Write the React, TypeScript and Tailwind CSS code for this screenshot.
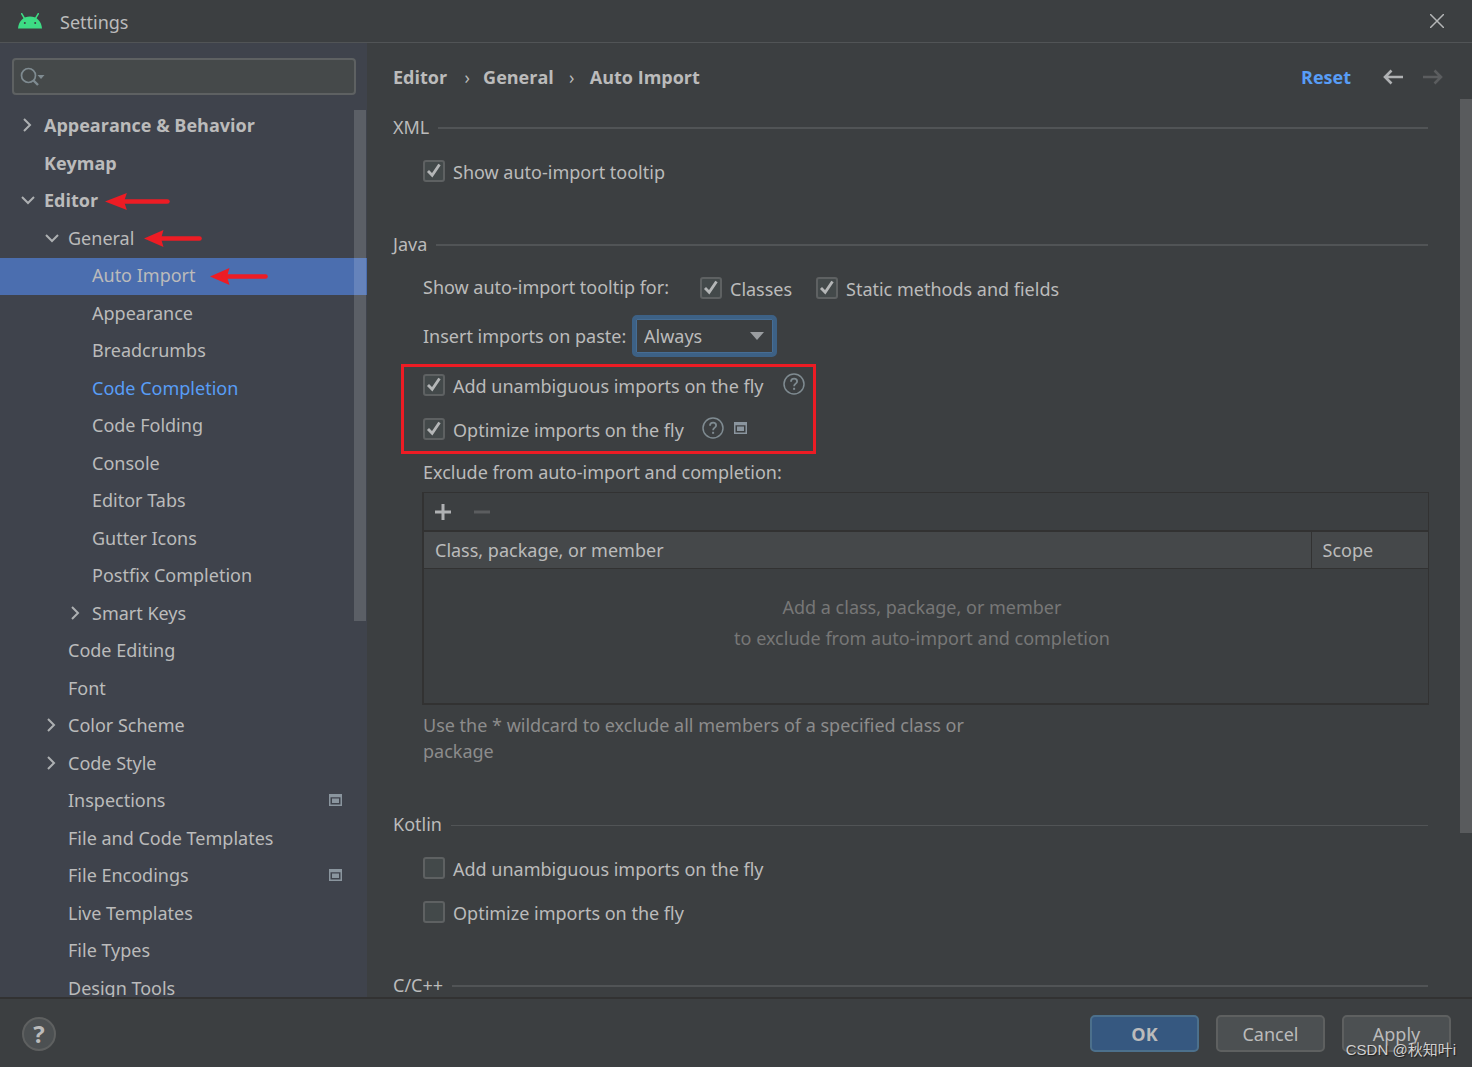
import { useState, type ReactNode } from 'react';
import clsx from 'clsx';

interface TreeItem {
  label: string;
  level: number;
  state?: 'open' | 'closed';
  bold?: boolean;
  link?: boolean;
  project?: boolean;
  arrow?: string;
}

const TREE: TreeItem[] = [
  { label: 'Appearance & Behavior', level: 0, state: 'closed', bold: true },
  { label: 'Keymap', level: 0, bold: true },
  { label: 'Editor', level: 0, state: 'open', bold: true, arrow: 'left-[105px] w-[65px]' },
  { label: 'General', level: 1, state: 'open', arrow: 'left-[144px] w-[58px]' },
  { label: 'Auto Import', level: 2, arrow: 'left-[210px] w-[58px]' },
  { label: 'Appearance', level: 2 },
  { label: 'Breadcrumbs', level: 2 },
  { label: 'Code Completion', level: 2, link: true },
  { label: 'Code Folding', level: 2 },
  { label: 'Console', level: 2 },
  { label: 'Editor Tabs', level: 2 },
  { label: 'Gutter Icons', level: 2 },
  { label: 'Postfix Completion', level: 2 },
  { label: 'Smart Keys', level: 2, state: 'closed' },
  { label: 'Code Editing', level: 1 },
  { label: 'Font', level: 1 },
  { label: 'Color Scheme', level: 1, state: 'closed' },
  { label: 'Code Style', level: 1, state: 'closed' },
  { label: 'Inspections', level: 1, project: true },
  { label: 'File and Code Templates', level: 1 },
  { label: 'File Encodings', level: 1, project: true },
  { label: 'Live Templates', level: 1 },
  { label: 'File Types', level: 1 },
  { label: 'Design Tools', level: 1 },
];

const INDENT = ['pl-5', 'pl-11', 'pl-[68px]'];

function AndroidIcon() {
  return (
    <svg width="24" height="16" viewBox="0 0 24 16" className="shrink-0">
      <path d="M3.800 .8l2.800 4.800M20.200 .8l-2.800 4.800" stroke="#3ddc84" strokeWidth="1.600" strokeLinecap="round" />
      <path d="M0 15.6C.5 8 5.5 3.4 12 3.4S23.500 8 24 15.600z" fill="#3ddc84" />
      <circle cx="6.800" cy="10" r="1" fill="#3c3f41" />
      <circle cx="17.200" cy="10" r="1" fill="#3c3f41" />
    </svg>
  );
}

function Chevron({ state }: { state?: 'open' | 'closed' }) {
  return (
    <svg width="16" height="16" viewBox="0 0 16 16" className="shrink-0" fill="none" stroke="#adb0b2" strokeWidth="2">
      {state === 'closed' && <path d="M4 2l6 6-6 6" />}
      {state === 'open' && <path d="M2 5l6 6 6-6" />}
    </svg>
  );
}

// Marks settings that are stored per project
function ProjectIcon() {
  return (
    <svg width="13" height="12" viewBox="0 0 13 12" className="shrink-0">
      <path fillRule="evenodd" d="M0 0h13v12H0zM1.500 3.200v7.300h10V3.200z" fill="#8a959e" />
      <path d="M3 4.500h7V9H3z" fill="#8a959e" />
    </svg>
  );
}

function HelpIcon() {
  return (
    <svg width="22" height="22" viewBox="0 0 22 22" className="shrink-0" fill="none" stroke="#7f8b91">
      <circle cx="11" cy="11" r="10" strokeWidth="1.5" />
      <path d="M8 8.800c0-2 1.300-3.100 3.100-3.100s3 1.100 3 2.700c0 2.200-3 2.300-3 4.800" strokeWidth="1.800" />
      <path d="M11.100 14.800v2" strokeWidth="2" />
    </svg>
  );
}

function RedArrow({ className }: { className: string }) {
  return (
    <svg className={clsx('pointer-events-none absolute top-[9px] h-[18px]', className)} viewBox="0 0 58 18" preserveAspectRatio="none">
      <path d="M0 9.500L19.500 1l-2.500 8.500 2.500 8.500z" fill="#ed1c24" />
      <path d="M14 9.500h41.500" stroke="#ed1c24" strokeWidth="4.600" strokeLinecap="round" />
    </svg>
  );
}

function Check({ label, on = false, children }: { label: string; on?: boolean; children?: ReactNode }) {
  const [checked, setChecked] = useState(on);
  return (
    <div className="flex h-7 items-center">
      <label className="flex items-center gap-2">
        <span className="relative -mt-0.5 flex">
          <input
            type="checkbox"
            checked={checked}
            onChange={(e) => setChecked(e.target.checked)}
            className="size-[22px] appearance-none rounded-[3px] border-2 border-[#5e6162] bg-[#43494a]"
          />
          {checked && (
            <svg className="pointer-events-none absolute inset-0" width="22" height="22" viewBox="0 0 22 22" fill="none">
              <path d="M5 11l4.200 4.300L16.500 4.500" stroke="#b4b6b7" strokeWidth="2.800" />
            </svg>
          )}
        </span>
        <span>{label}</span>
      </label>
      {children}
    </div>
  );
}

function SectionTitle({ title, thin }: { title: string; thin?: boolean }) {
  return (
    <div className="flex h-7 items-center gap-[9px]">
      <h2>{title}</h2>
      <div className={clsx('mt-0.5 flex-1 bg-[#515456]', thin ? 'h-px' : 'h-0.5')} />
    </div>
  );
}

function Sidebar() {
  const [selected, setSelected] = useState('Auto Import');
  return (
    <aside className="relative flex w-[367px] shrink-0 flex-col overflow-hidden bg-[#3f434c]">
      <div className="px-3 pt-[15px] pr-[11px]">
        <div className="flex h-[37px] items-center rounded-[4px] border-2 border-[#5e6162] bg-[#45494a] pl-1.5">
          <svg width="26" height="20" viewBox="0 0 26 20" fill="none" className="shrink-0">
            <circle cx="8.500" cy="8.500" r="7" stroke="#7f8b91" strokeWidth="1.700" />
            <path d="M13.500 13.500l4.500 4.500" stroke="#7f8b91" strokeWidth="2.400" />
            <path d="M17.500 8h7l-3.500 4z" fill="#7f8b91" />
          </svg>
          <input type="text" aria-label="Search settings" className="min-w-0 flex-1 bg-transparent px-1 outline-none" />
        </div>
      </div>
      <ul className="mt-[13px]">
        {TREE.map((item) => (
          <li key={item.label} className="relative odd:h-[37px] even:h-[38px]">
            <button
              onClick={() => setSelected(item.label)}
              className={clsx(
                'flex h-full w-full items-center gap-2 pb-[3px] text-left',
                INDENT[item.level],
                item.bold && "font-['Open_Sans',sans-serif] font-bold",
                item.link && 'text-[#589df6]',
                selected === item.label && 'bg-[#4b6eaf]'
              )}
            >
              <Chevron state={item.state} />
              <span className="flex-1">{item.label}</span>
              {item.project && <span className="pr-[25px]"><ProjectIcon /></span>}
            </button>
            {item.arrow && <RedArrow className={item.arrow} />}
          </li>
        ))}
      </ul>
      {/* Scrollbar */}
      <div className="absolute top-[67px] right-px h-[511px] w-3 bg-white/15" />
    </aside>
  );
}

function ExcludeTable() {
  return (
    <div className="-mx-px border-2 border-t border-r border-[#323232]">
      <div className="flex h-[37px] items-center gap-[23px] pl-[11px]">
        <button aria-label="Add">
          <svg width="16" height="16" viewBox="0 0 16 16" stroke="#afb1b3" strokeWidth="3"><path d="M0 8h16M8 0v16" /></svg>
        </button>
        <button aria-label="Remove" disabled>
          <svg width="16" height="16" viewBox="0 0 16 16" stroke="#5b5d5f" strokeWidth="3"><path d="M0 8h16" /></svg>
        </button>
      </div>
      <table className="w-full border-t-2 border-[#323232]">
        <thead>
          <tr className="h-[37px] border-b border-[#323232] bg-[#45484a] text-left">
            <th className="border-r border-[#323232] pl-[11px] font-normal">Class, package, or member</th>
            <th className="w-[117px] pl-[11px] font-normal">Scope</th>
          </tr>
        </thead>
        <tbody>
          <tr>
            <td colSpan={2} className="h-[135px] pr-2 pb-[26px] text-center leading-[31px] text-[#777777]">
              Add a class, package, or member<br />
              to exclude from auto-import and completion
            </td>
          </tr>
        </tbody>
      </table>
    </div>
  );
}

function Content() {
  return (
    <main className="relative flex min-w-0 flex-1 flex-col overflow-hidden pr-11 pl-[26px]">
      <div className="flex h-[70px] shrink-0 items-center justify-between pb-0.5 font-['Open_Sans',sans-serif] font-bold">
        <nav aria-label="Breadcrumb" className="flex items-center">
          <span>Editor</span>
          <span className="w-9 pl-1 text-center font-normal">›</span>
          <span>General</span>
          <span className="w-9 text-center font-normal">›</span>
          <span>Auto Import</span>
        </nav>
        <div className="-mr-[15px] flex items-center">
          <a href="#reset" className="text-[#589df6]">Reset</a>
          <button aria-label="Back" className="ml-8">
            <svg width="20" height="16" viewBox="0 0 20 16" fill="none" stroke="#afb1b3" strokeWidth="2.600"><path d="M20 8H2M8.500 1.500L2 8l6.500 6.500" /></svg>
          </button>
          <button aria-label="Forward" disabled className="ml-5">
            <svg width="20" height="16" viewBox="0 0 20 16" fill="none" stroke="#5b5d5f" strokeWidth="2.600"><path d="M0 8h18M11.500 1.500L18 8l-6.500 6.500" /></svg>
          </button>
        </div>
      </div>

      <section>
        <SectionTitle title="XML" />
        <div className="mt-[17px] pl-[30px]">
          <Check label="Show auto-import tooltip" on />
        </div>
      </section>

      <section className="mt-11">
        <SectionTitle title="Java" />
        <div className="mt-[15px] flex flex-col pl-[30px]">
          <div className="flex items-center">
            <span className="w-[277px] pb-1">Show auto-import tooltip for:</span>
            <div className="w-[116px]"><Check label="Classes" on /></div>
            <Check label="Static methods and fields" on />
          </div>
          <div className="mt-[10px] flex items-center">
            <label htmlFor="paste" className="w-[209px]">Insert imports on paste:</label>
            <div className="relative">
              <select
                id="paste"
                defaultValue="Always"
                className="h-[42px] w-[145px] appearance-none rounded-[5px] border-4 border-[#3d6185] bg-[#3c3f41] pl-2 shadow-[inset_0_0_0_1px_#466d94] outline-none"
              >
                <option>Always</option>
                <option>Ask</option>
                <option>Never</option>
              </select>
              <svg className="pointer-events-none absolute top-[17px] right-[13px]" width="14" height="8" viewBox="0 0 14 8">
                <path d="M0 0h14L7 8z" fill="#9a9da0" />
              </svg>
            </div>
          </div>
          <div className="relative mt-[15px] flex flex-col gap-4">
            <Check label="Add unambiguous imports on the fly" on>
              <span className="ml-[19px] pb-1"><HelpIcon /></span>
            </Check>
            <Check label="Optimize imports on the fly" on>
              <span className="mr-2.5 ml-[18px] pb-1"><HelpIcon /></span>
              <span className="pb-1"><ProjectIcon /></span>
            </Check>
            <div className="pointer-events-none absolute -top-2 -left-[22px] h-[90px] w-[415px] border-3 border-[#ed1c24]" />
          </div>
          <p className="mt-3.5 mb-1.5 h-7">Exclude from auto-import and completion:</p>
          <ExcludeTable />
          <p className="mt-[7px] max-w-[580px] leading-[26px] text-[#8c8c8c]">
            Use the * wildcard to exclude all members of a specified class or package
          </p>
        </div>
      </section>

      <section className="mt-[46px]">
        <SectionTitle title="Kotlin" thin />
        <div className="mt-[17px] flex flex-col gap-4 pl-[30px]">
          <Check label="Add unambiguous imports on the fly" />
          <Check label="Optimize imports on the fly" />
        </div>
      </section>

      <section className="mt-11">
        <SectionTitle title="C/C++" />
      </section>

      {/* Scrollbar */}
      <div className="absolute top-14 right-0 h-[734px] w-3 bg-[#595b5d]" />
    </main>
  );
}

export default function App() {
  return (
    <div className="relative flex h-screen flex-col overflow-hidden bg-[#3c3f41] font-['Noto_Sans','Noto_Sans_CJK_SC',sans-serif] text-[18px] leading-7 text-[#bbbbbb]">
      <header className="flex h-[43px] shrink-0 items-center border-b border-[#515456] pr-7 pl-[18px]">
        <AndroidIcon />
        <h1 className="ml-[18px] flex-1 pt-0.5">Settings</h1>
        <button aria-label="Close">
          <svg width="14" height="14" viewBox="0 0 14 14" stroke="#b4b6b7" strokeWidth="1.500"><path d="M0 0l14 14M14 0L0 14" /></svg>
        </button>
      </header>

      <div className="flex min-h-0 flex-1">
        <Sidebar />
        <Content />
      </div>

      <footer className="flex h-[70px] shrink-0 items-center gap-[17px] border-t-2 border-[#323232] pt-px pr-[21px] pl-[22px]">
        <button aria-label="Help" className="flex size-[34px] items-center justify-center rounded-full border-2 border-[#5e6060] bg-[#4c5052] font-['Open_Sans',sans-serif] text-[24px] font-bold">?</button>
        <div className="flex-1" />
        <button className="h-[37px] w-[109px] rounded-[5px] border-2 border-[#4c708c] bg-[#365880] font-['Open_Sans',sans-serif] font-bold">OK</button>
        <button className="h-[37px] w-[109px] rounded-[5px] border-2 border-[#5e6060] bg-[#4c5052]">Cancel</button>
        <button className="h-[37px] w-[109px] rounded-[5px] border-2 border-[#5e6060] bg-[#4c5052]">Apply</button>
      </footer>

      <div className="pointer-events-none absolute right-4 bottom-[5px] font-['Liberation_Sans','Noto_Sans_CJK_SC',sans-serif] text-[15px] leading-6 text-[#d0d0d0] [text-shadow:1px_1px_1px_#222]">
        CSDN @秋知叶i
      </div>
    </div>
  );
}
